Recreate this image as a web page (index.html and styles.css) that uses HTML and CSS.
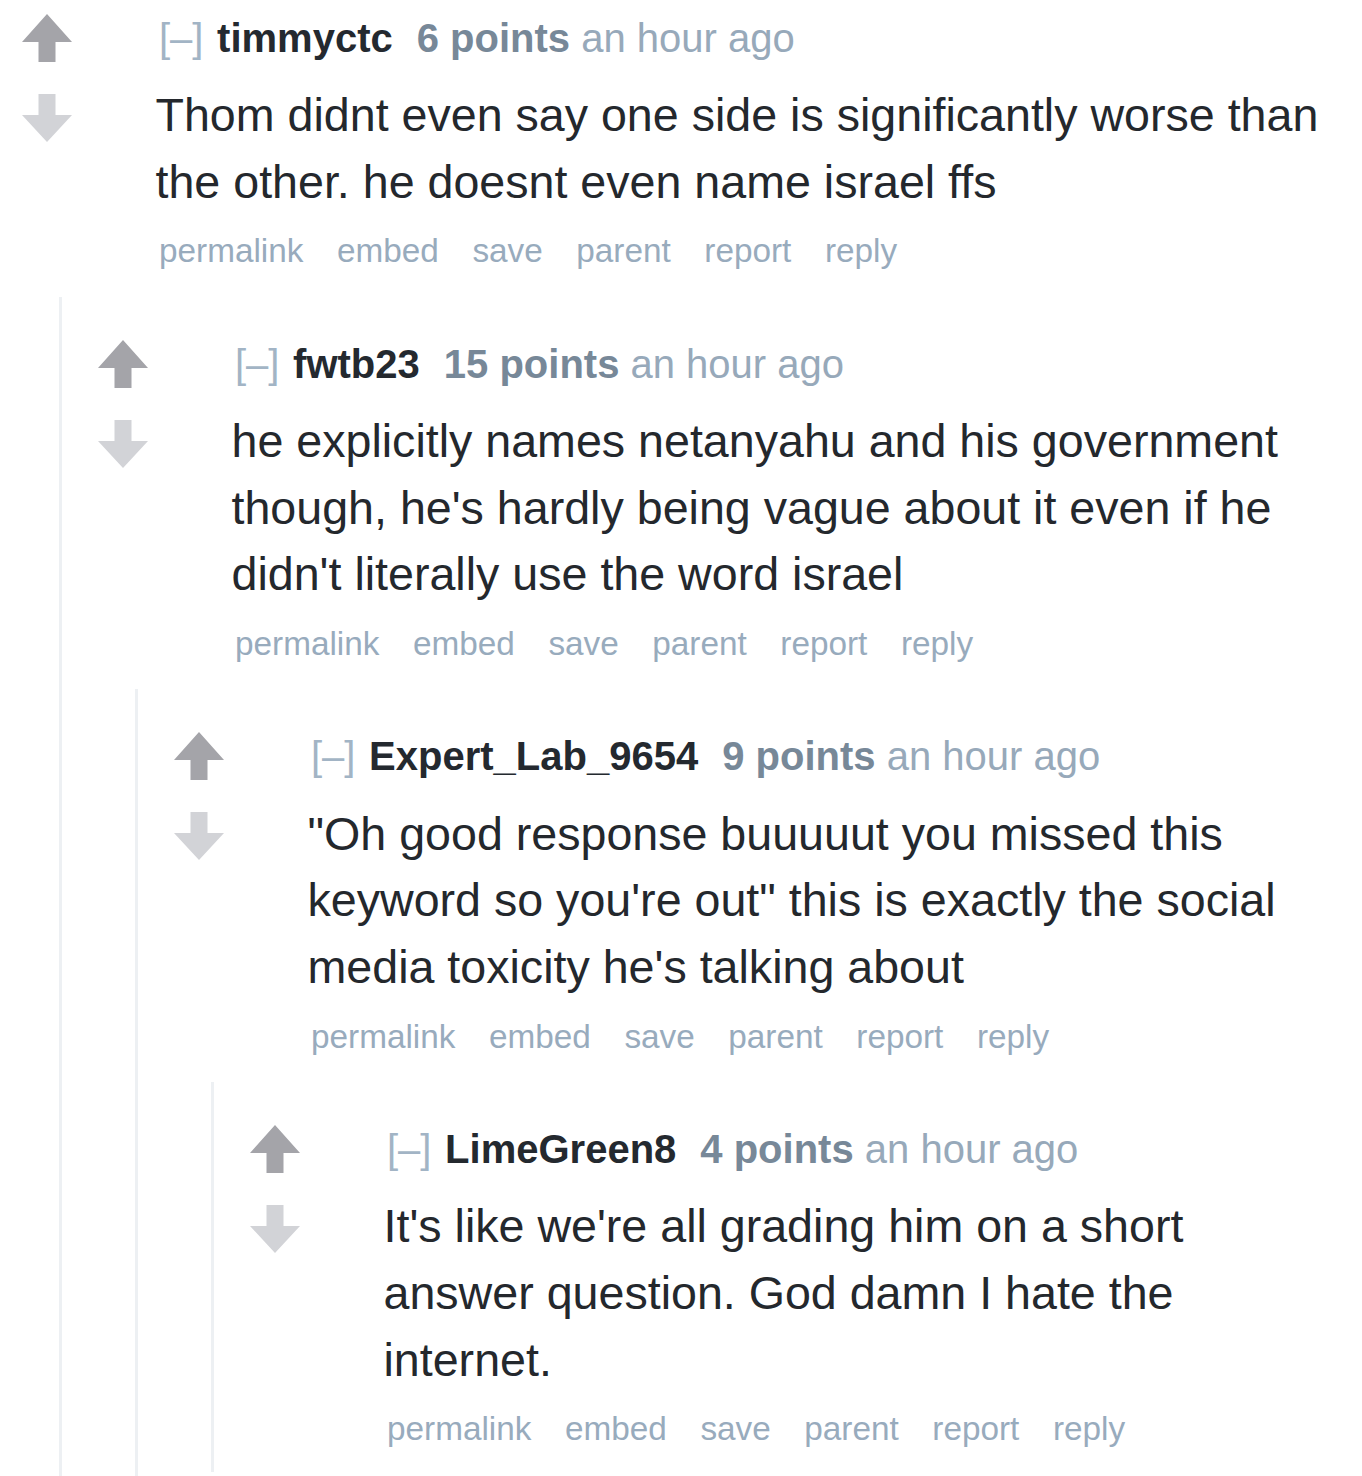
FILE: index.html
```html
<!DOCTYPE html>
<html lang="en">
<head>
<meta charset="utf-8">
<title>Comments</title>
<link rel="stylesheet" href="styles.css">
</head>
<body>
<div class="comment root">
  <div class="row">
    <div class="midcol">
      <svg class="arrow up" viewBox="0 0 50 48"><path d="M25 0 L50 28 L33.5 28 L33.5 48 L16.5 48 L16.5 28 L0 28 Z"/></svg>
      <svg class="arrow down" viewBox="0 0 50 48"><path d="M16.5 0 H33.5 V21 H50 L25 48 L0 21 H16.5 Z"/></svg>
    </div>
    <div class="entry">
      <p class="tagline"><span class="expand">[–]</span> <a class="author">timmyctc</a><span class="score">6 points</span> <span class="time">an hour ago</span></p>
      <div class="md">Thom didnt even say one side is significantly worse than the other. he doesnt even name israel ffs</div>
      <ul class="buttons"><li>permalink</li><li>embed</li><li>save</li><li>parent</li><li>report</li><li>reply</li></ul>
    </div>
  </div>
  <div class="child">
    <div class="comment">
      <div class="row">
        <div class="midcol">
          <svg class="arrow up" viewBox="0 0 50 48"><path d="M25 0 L50 28 L33.5 28 L33.5 48 L16.5 48 L16.5 28 L0 28 Z"/></svg>
          <svg class="arrow down" viewBox="0 0 50 48"><path d="M16.5 0 H33.5 V21 H50 L25 48 L0 21 H16.5 Z"/></svg>
        </div>
        <div class="entry">
          <p class="tagline"><span class="expand">[–]</span> <a class="author">fwtb23</a><span class="score">15 points</span> <span class="time">an hour ago</span></p>
          <div class="md">he explicitly names netanyahu and his government though, he's hardly being vague about it even if he didn't literally use the word israel</div>
          <ul class="buttons"><li>permalink</li><li>embed</li><li>save</li><li>parent</li><li>report</li><li>reply</li></ul>
        </div>
      </div>
      <div class="child">
        <div class="comment">
          <div class="row">
            <div class="midcol">
              <svg class="arrow up" viewBox="0 0 50 48"><path d="M25 0 L50 28 L33.5 28 L33.5 48 L16.5 48 L16.5 28 L0 28 Z"/></svg>
              <svg class="arrow down" viewBox="0 0 50 48"><path d="M16.5 0 H33.5 V21 H50 L25 48 L0 21 H16.5 Z"/></svg>
            </div>
            <div class="entry">
              <p class="tagline"><span class="expand">[–]</span> <a class="author">Expert_Lab_9654</a><span class="score">9 points</span> <span class="time">an hour ago</span></p>
              <div class="md">"Oh good response buuuuut you missed this keyword so you're out" this is exactly the social media toxicity he's talking about</div>
              <ul class="buttons"><li>permalink</li><li>embed</li><li>save</li><li>parent</li><li>report</li><li>reply</li></ul>
            </div>
          </div>
          <div class="child">
            <div class="comment">
              <div class="row">
                <div class="midcol">
                  <svg class="arrow up" viewBox="0 0 50 48"><path d="M25 0 L50 28 L33.5 28 L33.5 48 L16.5 48 L16.5 28 L0 28 Z"/></svg>
                  <svg class="arrow down" viewBox="0 0 50 48"><path d="M16.5 0 H33.5 V21 H50 L25 48 L0 21 H16.5 Z"/></svg>
                </div>
                <div class="entry">
                  <p class="tagline"><span class="expand">[–]</span> <a class="author">LimeGreen8</a><span class="score">4 points</span> <span class="time">an hour ago</span></p>
                  <div class="md">It's like we're all grading him on a short answer question. God damn I hate the internet.</div>
                  <ul class="buttons"><li>permalink</li><li>embed</li><li>save</li><li>parent</li><li>report</li><li>reply</li></ul>
                </div>
              </div>
            </div>
          </div>
        </div>
      </div>
    </div>
  </div>
</div>
</body>
</html>
```
FILE: styles.css
```css
html, body {
  margin: 0;
  padding: 0;
  background: #ffffff;
}
body {
  font-family: "Liberation Sans", Arial, sans-serif;
  padding-right: 30px;
  overflow: hidden;
  height: 1476px;
}
.comment {
  padding-top: 42px;
  padding-bottom: 23px;
}
.comment.root {
  padding-top: 13px;
}
.row {
  display: flex;
}
.midcol {
  width: 137px;
  padding-left: 22px;
  padding-top: 1px;
  flex: none;
  display: flex;
  flex-direction: column;
  gap: 32px;
}
.arrow {
  display: block;
  width: 50px;
  height: 48px;
}
.arrow.up path { fill: #a4a4a9; }
.arrow.down path { fill: #d2d3d7; }
.entry {
  flex: 1;
  min-width: 0;
}
.tagline {
  margin: 0;
  font-size: 40px;
  line-height: 50px;
  white-space: nowrap;
}
.expand {
  color: #a2b4c5;
}
.author {
  color: #24292f;
  font-weight: bold;
  margin-left: 2.5px;
  margin-right: 24px;
}
.score {
  color: #778898;
  font-weight: bold;
}
.time {
  color: #97a9ba;
}
.md {
  margin-top: 19.2px;
  margin-left: -3.5px;
  font-size: 46.6px;
  line-height: 66.7px;
  color: #24282d;
}
.buttons {
  list-style: none;
  margin: 15.8px 0 0;
  padding: 0;
  display: flex;
  font-size: 33.33px;
  line-height: 40px;
  color: #98abbd;
}
.buttons li {
  margin-right: 33.5px;
}
.child {
  margin-top: 25.5px;
  margin-left: 59px;
  border-left: 3px solid #edf0f3;
  padding-left: 14px;
}
```
